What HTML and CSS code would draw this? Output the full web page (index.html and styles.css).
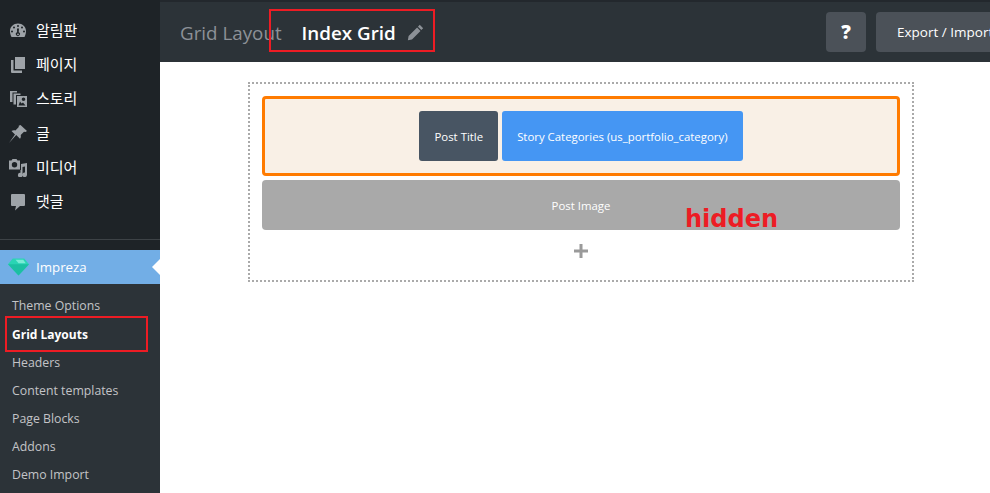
FILE: index.html
```html
<!DOCTYPE html>
<html lang="ko">
<head>
<meta charset="utf-8">
<title>Index Grid</title>
<link rel="stylesheet" href="styles.css">
</head>
<body>
<div class="app">
  <aside class="sidebar">
    <ul class="menu">
      <li class="menu-item"><svg class="mi" viewBox="0 0 20 20"><path fill-rule="evenodd" d="M10 3.500c-4.500 0-8 3.300-8 7.500 0 2.300.7 4.200 1.500 6h13c.8-1.800 1.500-3.700 1.500-6 0-4.200-3.500-7.500-8-7.500zM10 5a1 1 0 1 1 0 2 1 1 0 0 1 0-2zM6 6.500a1 1 0 1 1 0 2 1 1 0 0 1 0-2zm8 0a1 1 0 1 1 0 2 1 1 0 0 1 0-2zM4 10.500a1 1 0 1 1 0 2 1 1 0 0 1 0-2zm12 0a1 1 0 1 1 0 2 1 1 0 0 1 0-2zM11 8.500l-.3 3.700a2 2 0 1 1-1.600 0l-.1-3.700zM10 13.400a.9.9 0 1 0 0 1.800.9.9 0 0 0 0-1.800z"/></svg><span>알림판</span></li>
      <li class="menu-item"><svg class="mi" viewBox="0 0 20 20"><path d="M7 3h10v12H7z"/><path d="M3 6h2.500v10.500H14V19H4a1 1 0 0 1-1-1z"/></svg><span>페이지</span></li>
      <li class="menu-item"><svg class="mi" viewBox="0 0 20 20"><path fill-rule="evenodd" d="M2 3h7v1.500H4.500V14H2zM5.500 5.500h7V7H8v9.500H5.500zM9 8h10v11H9zm6.500 1.500a1.800 1.800 0 1 0 0 3.600 1.800 1.800 0 0 0 0-3.600zM10.500 17.500h7L15 14.500l-1.500 1-1.500-2z"/></svg><span>스토리</span></li>
      <li class="menu-item"><svg class="mi" viewBox="0 0 20 20"><path d="M12.500 2l6.500 6-1.500 1-1.500-.3-3.300 3.300c.4 1.500.1 2.800-.7 3.800l-3.800-3.700L1 20l6-8.500L3.500 8c1.200-.8 2.500-1 3.900-.6L10.800 4l-.1-1.300z"/></svg><span>글</span></li>
      <li class="menu-item"><svg class="mi" viewBox="0 0 20 20"><path fill-rule="evenodd" d="M4.500 2h4l1 1.500H12v9H1v-9h2.500zM6.500 5a2.700 2.700 0 1 0 0 5.400 2.700 2.700 0 0 0 0-5.400zM19 6v11.700a2.300 2.300 0 1 1-2-2.200V9.500l-2.500.5v8a2.300 2.300 0 1 1-2-2.200V13h.5V7z"/></svg><span>미디어</span></li>
      <li class="menu-item"><svg class="mi" viewBox="0 0 20 20"><path d="M4 3h12a1 1 0 0 1 1 1v10a1 1 0 0 1-1 1h-4l-5 4.500L8 15H4a1 1 0 0 1-1-1V4a1 1 0 0 1 1-1z"/></svg><span>댓글</span></li>
    </ul>
    <div class="separator"></div>
    <div class="active-item">
      <svg class="gem" viewBox="0 0 22 18"><path fill="#2ad4b4" d="M5 0h12l5 6-11 12L0 6z"/><path fill="#1cbfa2" d="M0 6h22L11 18z"/><path fill="#7aebd6" d="M8 1.500h8l2.500 3.500H11z"/></svg>
      <span>Impreza</span>
      <i class="notch"></i>
    </div>
    <ul class="submenu">
      <li>Theme Options</li>
      <li class="current">Grid Layouts</li>
      <li>Headers</li>
      <li>Content templates</li>
      <li>Page Blocks</li>
      <li>Addons</li>
      <li>Demo Import</li>
    </ul>
    <div class="mark mark-side"></div>
  </aside>
  <main class="main">
    <header class="topbar">
      <span class="crumb">Grid Layout</span>
      <span class="name">Index Grid</span>
      <svg class="pencil" viewBox="0 0 16 16"><path d="M12 .8l3.200 3.200-1.700 1.700-3.200-3.200zM9.500 3.300l3.200 3.200-8 8L.8 15.200l.7-3.900z"/></svg>
      <div class="actions">
        <button class="btn btn-help">?</button>
        <button class="btn btn-export">Export / Import</button>
      </div>
      <div class="mark mark-top"></div>
    </header>
    <section class="canvas">
      <div class="board">
        <div class="row row-selected">
          <div class="el el-title">Post Title</div>
          <div class="el el-cat">Story Categories (us_portfolio_category)</div>
        </div>
        <div class="row row-hidden">Post Image<span class="hidden-note">hidden</span></div>
        <div class="add">
          <svg viewBox="0 0 14 14"><path d="M5.500 0h3v5.500H14v3H8.500V14h-3V8.500H0v-3h5.500z"/></svg>
        </div>
      </div>
    </section>
  </main>
</div>
</body>
</html>
```
FILE: styles.css
```css
* { box-sizing: border-box; }
html, body { margin: 0; height: 100%; overflow: hidden; background: #fff; }
body { font-family: "Open Sans", "Noto Sans CJK KR", sans-serif; }
ul { list-style: none; margin: 0; padding: 0; }

.app { display: flex; height: 493px; width: 990px; overflow: hidden; }

.sidebar { position: relative; width: 160px; flex: none; background: #1e2327; }
.menu { padding-top: 13px; }
.menu-item { display: flex; align-items: center; height: 34.2px; padding-left: 8px; color: #fff; font: 15px/34px "Noto Sans CJK KR", sans-serif; }
.mi { width: 20px; height: 20px; fill: #9ea3a8; flex: none; margin-right: 8px; }
.separator { margin-top: 20.8px; height: 1px; background: #3d4246; }
.active-item { position: relative; display: flex; align-items: center; margin-top: 10px; height: 34px; background: #72aee6; color: #fff; font-size: 13.3px; padding-left: 8px; }
.gem { width: 21px; height: 18px; margin-right: 7px; }
.notch { position: absolute; right: 0; top: 9px; border: 8px solid transparent; border-right-color: #fff; border-left-width: 0; }
.submenu { background: #2c3338; padding-top: 8px; height: 209px; }
.submenu li { height: 28px; padding-left: 12px; font-size: 12.3px; line-height: 28px; color: #c3c4c7; }
.submenu li:first-child { height: 29px; }
.submenu .current { color: #fff; font-size: 12px; font-weight: 700; }

.mark { position: absolute; border: 2px solid #ed1c24; pointer-events: none; }
.mark-side { left: 5px; top: 316px; width: 143px; height: 36px; }
.mark-top { left: 109px; top: 7px; width: 166px; height: 43px; }

.main { flex: 1; min-width: 0; }
.topbar { position: relative; display: flex; align-items: center; height: 62px; padding-left: 20px; background: #2c3338; border-top: 2px solid #23282d; color: #fff; white-space: nowrap; }
.crumb { font-size: 18.8px; padding-top: 2px; color: #8c9197; margin-right: 20px; }
.name { font-size: 18.8px; padding-top: 2px; font-weight: 600; color: #fff; }
.pencil { width: 17px; height: 17px; fill: #8c9197; margin-left: 11px; }
.actions { display: flex; gap: 10px; margin-left: auto; margin-right: -67px; }
.btn { height: 40px; border: 0; border-radius: 4px; background: #4b5158; color: #fff; font-family: inherit; font-size: 13.5px; padding: 0 21px; }
.btn-help { width: 40px; padding: 0; font-size: 19px; font-weight: 800; }
.btn-export { width: 181px; text-align: left; }

.canvas { padding: 20px 76px 0 88px; }
.board { width: 666px; height: 200px; border: 2px dotted #aaa; padding: 12px 12px 0; }
.row { border-radius: 4px; font-size: 11.4px; color: #fff; }
.row-selected { display: flex; justify-content: center; align-items: center; gap: 4px; height: 80px; background: #f9f0e6; border: 3px solid #ff7b00; }
.el { display: flex; align-items: center; height: 50px; padding: 0 15px; border-radius: 3px; }
.el-title { background: #485563; }
.el-cat { background: #4596f3; }
.row-hidden { position: relative; margin-top: 4px; height: 50px; background: #a9a9a9; display: flex; align-items: center; justify-content: center; }
.hidden-note { position: absolute; left: 423px; top: 24px; color: #ed1c24; font: 700 24px/30px "DejaVu Sans", sans-serif; }
.add { display: flex; justify-content: center; padding-top: 14px; }
.add svg { width: 14px; height: 14px; fill: #9a9a9a; }
```
